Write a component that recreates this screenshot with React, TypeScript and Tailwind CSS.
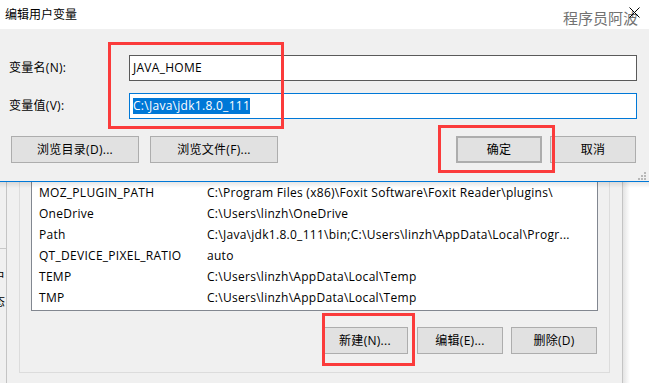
import React from "react";

const rows: [string, string][] = [
  ["MOZ_PLUGIN_PATH", "C:\\Program Files (x86)\\Foxit Software\\Foxit Reader\\plugins\\"],
  ["OneDrive", "C:\\Users\\linzh\\OneDrive"],
  ["Path", "C:\\Java\\jdk1.8.0_111\\bin;C:\\Users\\linzh\\AppData\\Local\\Progr..."],
  ["QT_DEVICE_PIXEL_RATIO", "auto"],
  ["TEMP", "C:\\Users\\linzh\\AppData\\Local\\Temp"],
  ["TMP", "C:\\Users\\linzh\\AppData\\Local\\Temp"],
];

function Btn({ children, className = "" }: { children: React.ReactNode; className?: string }) {
  return (
    <div
      className={
        "h-[27px] flex items-center justify-center bg-[#e1e1e1] border border-[#adadad] text-[12px] text-black " +
        className
      }
    >
      {children}
    </div>
  );
}

export default function App() {
  return (
    <div className="relative w-[649px] h-[383px] overflow-hidden bg-white font-['Open_Sans','Noto_Sans_CJK_SC',sans-serif] text-[12px] tracking-[0.28px] text-black">
      {/* Top dialog */}
      <div className="flex flex-col">
        <div className="h-[29px] bg-white flex items-center pl-[5px]">
          <span className="leading-[16px] tracking-normal">编辑用户变量</span>
        </div>
        <div className="h-[153px] bg-[#f0f0f0] border-b border-[#0078d7] flex flex-col pt-[26px]">
          <div className="flex items-center">
            <div className="w-[129px] pl-[9px] leading-[16px]">变量名(N):</div>
            <div className="w-[508px] h-[26px] border border-[#5a5a5a] bg-white flex items-center pl-[3px]">
              <span className="leading-[16px]">JAVA_HOME</span>
            </div>
          </div>
          <div className="flex items-center mt-[12px]">
            <div className="w-[129px] pl-[9px] leading-[16px]">变量值(V):</div>
            <div className="w-[508px] h-[26px] border border-[#0078d7] bg-white flex items-center pl-[3px]">
              <span className="leading-[16px] h-[16px] bg-[#0078d7] text-white inline-block">C:\Java\jdk1.8.0_111</span>
            </div>
          </div>
          <div className="flex mt-[17px]">
            <Btn className="ml-[11px] w-[128px]">浏览目录(D)...</Btn>
            <Btn className="ml-[11px] w-[128px]">浏览文件(F)...</Btn>
            <Btn className="ml-[178px] w-[86px] border-2 border-[#0078d7]">确定</Btn>
            <Btn className="ml-[8px] w-[86px]">取消</Btn>
          </div>
        </div>
      </div>

      {/* Lower window */}
      <div className="relative flex h-[201px]">
        <div className="w-[6px] bg-[#f0f0f0] flex flex-col overflow-hidden">
          <div className="h-[66px]"></div>
          <div className="h-px bg-[#c8c8c8]"></div>
          <div className="relative h-[134px]">
            <span className="absolute left-[-7px] top-[20px] leading-[16px] whitespace-nowrap">户</span>
            <span className="absolute left-[-7px] top-[45px] leading-[16px] whitespace-nowrap">态</span>
          </div>
        </div>
        <div className="w-[617px] bg-[#f0f0f0] border-l border-r border-[#c4c4c4] flex flex-col pl-[12px]">
          <div className="w-[591px] h-[191px] border-l border-r border-b border-[#dcdcdc] flex flex-col">
            <div className="ml-[11px] w-[567px] bg-white border-l border-r border-b border-[#828790] pb-[2px] flex flex-col">
              {rows.map(([n, v]) => (
                <div key={n} className="h-[21px] flex items-center pl-[7px] whitespace-nowrap">
                  <span className="w-[168px] leading-[16px]">{n}</span>
                  <span className="leading-[16px]">{v}</span>
                </div>
              ))}
            </div>
            <div className="flex mt-[16px]">
              <Btn className="ml-[302px] w-[86px]">新建(N)...</Btn>
              <Btn className="ml-[9px] w-[86px]">编辑(E)...</Btn>
              <Btn className="ml-[8px] w-[86px]">删除(D)</Btn>
            </div>
          </div>
        </div>
        <div className="flex-1 flex">
          <div className="w-[7px] bg-gradient-to-r from-[#e4e4e4] to-white"></div>
          <div className="flex-1 bg-white"></div>
        </div>
        {/* shadow cast by top dialog */}
        <div className="absolute left-0 top-0 w-full h-[6px] bg-gradient-to-b from-black/10 to-transparent"></div>
      </div>

      {/* Watermark and close glyph */}
      <div className="absolute right-[11px] top-[8px] text-[15px] leading-[20px] tracking-normal text-[#727272]">程序员阿波</div>
      <svg className="absolute left-[629px] top-[7px]" width="11" height="11" viewBox="0 0 11 11">
        <path d="M0.5 0.5 L10.5 10.5 M10.5 0.5 L0.5 10.5" stroke="#000" strokeWidth="1" fill="none" />
      </svg>

      {/* resize grip */}
      <svg className="absolute left-[637px] top-[171px]" width="10" height="10" viewBox="0 0 10 10">
        <rect x="7" y="1" width="2" height="2" fill="#b8b8b8" />
        <rect x="4" y="4" width="2" height="2" fill="#b8b8b8" />
        <rect x="7" y="4" width="2" height="2" fill="#b8b8b8" />
        <rect x="1" y="7" width="2" height="2" fill="#b8b8b8" />
        <rect x="4" y="7" width="2" height="2" fill="#b8b8b8" />
        <rect x="7" y="7" width="2" height="2" fill="#b8b8b8" />
      </svg>

      {/* red annotation boxes */}
      <div className="absolute left-[108px] top-[42px] w-[176px] h-[87px] border-[3px] border-[#fb3b3b]"></div>
      <div className="absolute left-[438px] top-[125px] w-[117px] h-[48px] border-[3px] border-[#fb3b3b]"></div>
      <div className="absolute left-[322px] top-[313px] w-[93px] h-[53px] border-[3px] border-[#fb3b3b]"></div>
    </div>
  );
}
